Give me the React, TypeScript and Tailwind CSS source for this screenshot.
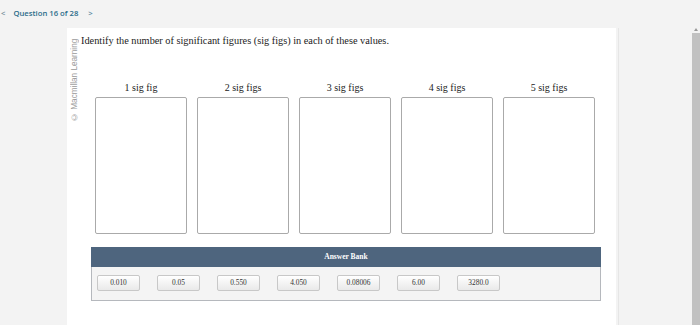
const LABELS = ["1 sig fig", "2 sig figs", "3 sig figs", "4 sig figs", "5 sig figs"];
const ANSWERS = ["0.010", "0.05", "0.550", "4.050", "0.08006", "6.00", "3280.0"];

function SortBox({ label }: { label: string }) {
  return (
    <div className="flex w-[92px] flex-col items-center">
      <div className="h-[12px] text-[10px] leading-[12px] text-[#222]">{label}</div>
      <div className="mt-[3px] h-[137px] w-full rounded-[2px] border border-[#aaaaaa] bg-white" />
    </div>
  );
}

export default function App() {
  return (
    <div className="flex h-[325px] w-[700px] flex-col overflow-hidden bg-[#f3f3f3] font-['Liberation_Serif',serif]">
      {/* top nav */}
      <div className="flex h-[28px] items-center font-['Open_Sans',sans-serif] text-[7.7px] font-semibold">
        <span className="ml-[1px] text-[#7a8f99]">&lt;</span>
        <span className="ml-[8px] text-[#2b6c8a]">Question 16 of 28</span>
        <span className="ml-[10px] text-[#5b8aa0]">&gt;</span>
      </div>

      <div className="flex flex-1">
        <div className="ml-[67px] flex w-[549px] bg-white">
          <div className="flex w-[14px] justify-center pt-[9px]">
            <span className="h-[84px] rotate-180 font-['Liberation_Sans',sans-serif] text-[8.2px] leading-[9px] whitespace-nowrap text-[#9a9a9a] [writing-mode:vertical-rl]">
              © Macmillan Learning
            </span>
          </div>

          <div className="flex flex-col">
            <p className="mt-[7px] text-[10.3px] leading-[12px] text-[#222]">
              Identify the number of significant figures (sig figs) in each of these values.
            </p>

            <div className="mt-[35px] ml-[14px] flex gap-[10px]">
              {LABELS.map((l) => (
                <SortBox key={l} label={l} />
              ))}
            </div>

            <div className="mt-[13px] ml-[10px] w-[510px]">
              <div className="flex h-[20px] items-center justify-center bg-[#4e657e] text-[7.5px] font-bold text-white">
                Answer Bank
              </div>
              <div className="flex h-[34px] gap-[17px] border border-t-0 border-[#b5b8bd] bg-[#f4f4f4] pt-[8px] pl-[5px]">
                {ANSWERS.map((a) => (
                  <div
                    key={a}
                    className="flex h-[16px] w-[43px] items-center justify-center rounded-[2px] border border-[#c8c8c8] bg-gradient-to-b from-white to-[#e9e9e9] text-[7.4px] text-[#333]"
                  >
                    {a}
                  </div>
                ))}
              </div>
            </div>
          </div>
        </div>

        <div className="ml-[2px] w-px bg-[#e6e6e6]" />

        {/* scrollbar */}
        <div className="ml-auto flex w-[8px] flex-col">
          <div className="flex h-[5px] items-start justify-center">
            <div className="h-0 w-0 border-x-[2px] border-b-[3px] border-x-transparent border-b-[#999]" />
          </div>
          <div className="flex-1 bg-[#c1c1c1]" />
        </div>
      </div>
    </div>
  );
}
